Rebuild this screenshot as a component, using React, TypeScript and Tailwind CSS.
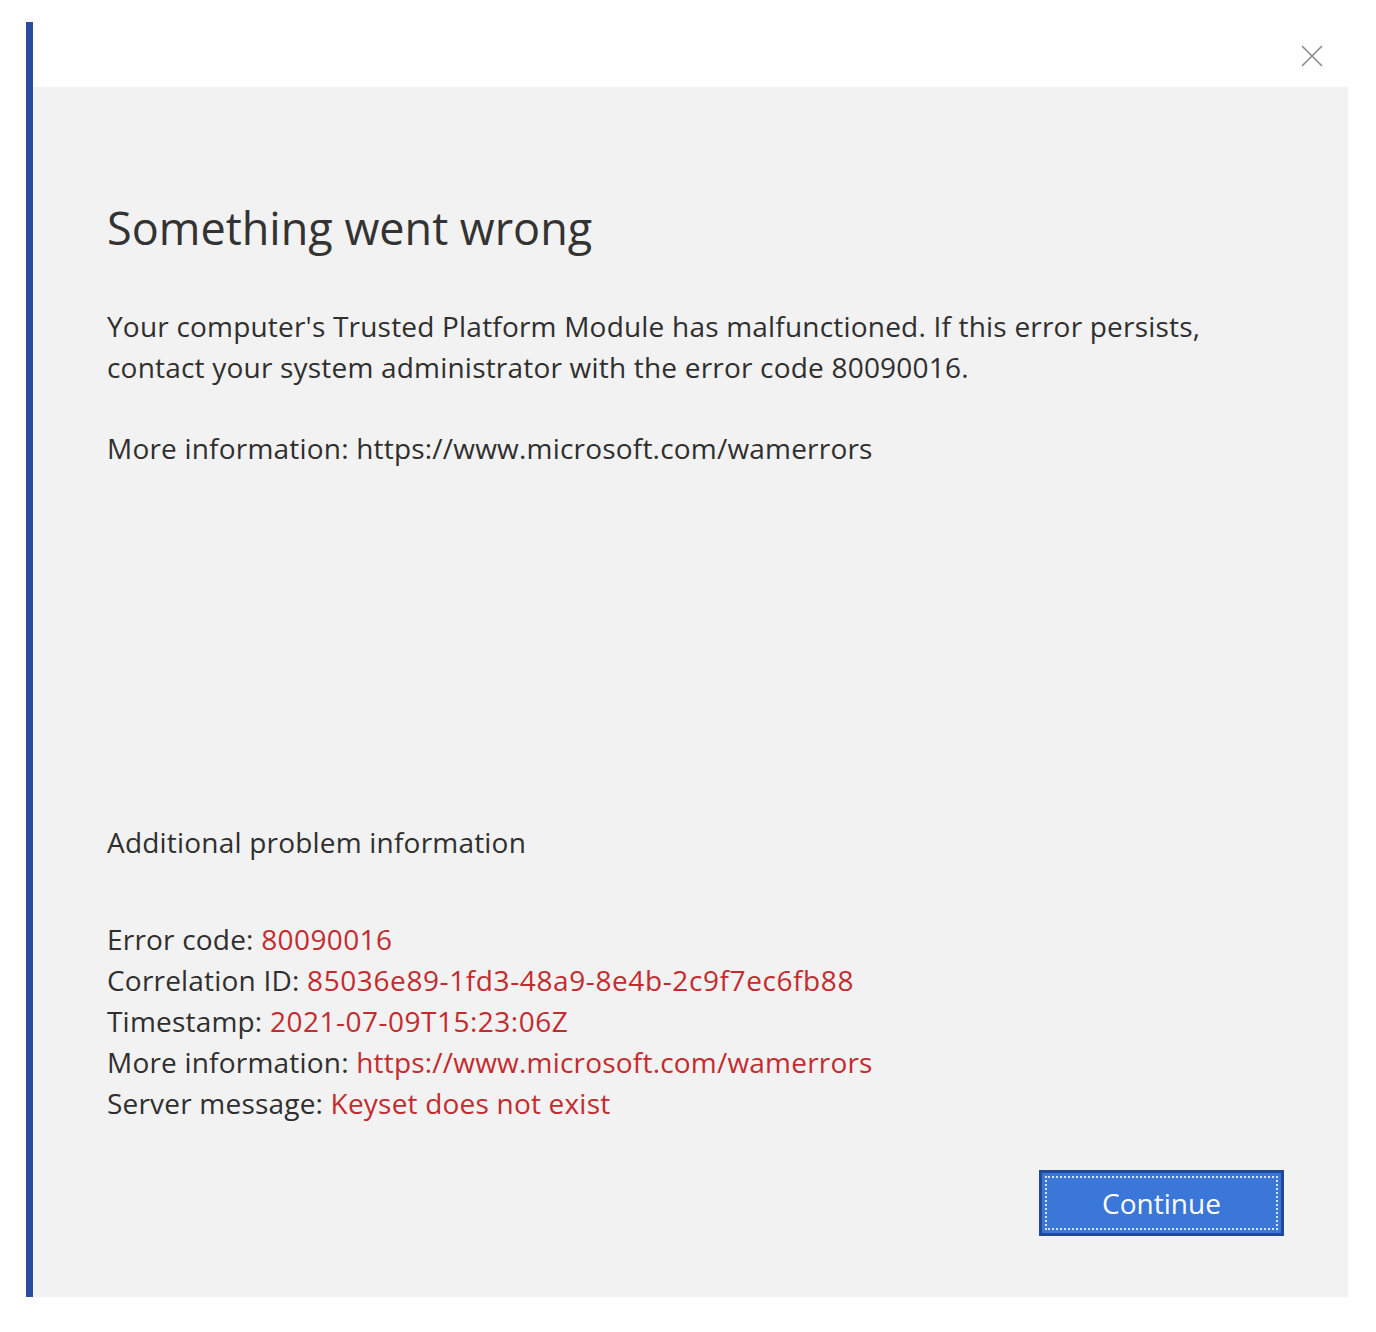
export default function App() {
  const font = { fontFamily: '"Open Sans", "Noto Sans", sans-serif' }

  return (
    <div className="w-full h-[1332px] bg-white pt-[22px] pl-[26px] pr-[28px]" style={font}>
      <div className="flex flex-col h-[1275px] border-l-[7px] border-[#2c4d9e]">
        {/* title bar */}
        <div className="h-[65px] flex justify-end items-center pr-[24px] pt-[2px]">
          <button className="text-[#8a8a8a]">
            <svg className="w-[24px] h-[24px]" viewBox="0 0 24 24" fill="none" stroke="currentColor" strokeWidth={1.6}>
              <path d="M2 2l20 20M22 2L2 22" />
            </svg>
          </button>
        </div>

        {/* body */}
        <div className="flex-1 bg-[#f2f2f2] pl-[74px] pr-[64px] flex flex-col text-[#2f2f2f]">
          <h1 className="mt-[113px] text-[45px] leading-[56px] text-[#333]">Something went wrong</h1>

          <p className="mt-[50px] text-[28px] leading-[41px] tracking-[0.2px]">
            Your computer's Trusted Platform Module has malfunctioned. If this error persists,
            <br />
            contact your system administrator with the error code 80090016.
          </p>

          <p className="mt-[40px] text-[28px] leading-[41px] tracking-[0.2px]">
            More information: https://www.microsoft.com/wamerrors
          </p>

          <p className="mt-[353px] text-[28px] leading-[41px] tracking-[0.2px]">Additional problem information</p>

          <div className="mt-[56px] text-[28px] leading-[41px] tracking-[0.2px]">
            <div>
              Error code: <span className="text-[#c42b2f] tracking-[0.4px]">80090016</span>
            </div>
            <div>
              Correlation ID: <span className="text-[#c42b2f] tracking-[0.6px]">85036e89-1fd3-48a9-8e4b-2c9f7ec6fb88</span>
            </div>
            <div>
              Timestamp: <span className="text-[#c42b2f] tracking-[0.5px]">2021-07-09T15:23:06Z</span>
            </div>
            <div>
              More information: <span className="text-[#c42b2f]">https://www.microsoft.com/wamerrors</span>
            </div>
            <div>
              Server message: <span className="text-[#c42b2f]">Keyset does not exist</span>
            </div>
          </div>

          <div className="mt-[46px] flex justify-end">
            <button className="w-[245px] h-[66px] bg-[#3b76d9] border-[3px] border-[#1f4a99] p-[3px]">
              <span className="flex items-center justify-center w-full h-full border-2 border-dotted border-white/80 text-white text-[28px]">
                Continue
              </span>
            </button>
          </div>
        </div>
      </div>
    </div>
  )
}
